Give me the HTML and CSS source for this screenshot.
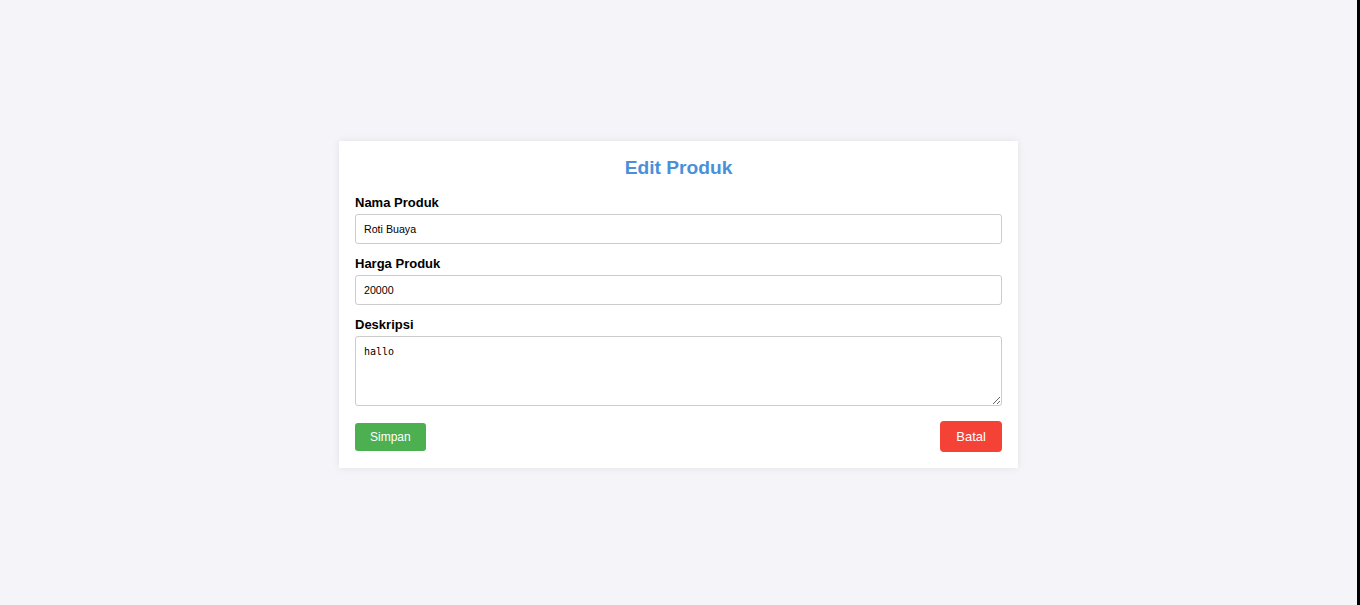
FILE: index.html
```html
<!DOCTYPE html>
<html lang="id">
<head>
<meta charset="utf-8">
<title>Edit Produk</title>
<link rel="stylesheet" href="styles.css">
</head>
<body>
  <div class="card">
    <h2 class="title">Edit Produk</h2>
    <form class="form">
      <label class="label" for="nama">Nama Produk</label>
      <input class="field" id="nama" type="text" value="Roti Buaya">
      <label class="label" for="harga">Harga Produk</label>
      <input class="field" id="harga" type="text" value="20000">
      <label class="label" for="desk">Deskripsi</label>
      <textarea class="area" id="desk">hallo</textarea>
      <div class="actions">
        <button class="btn btn-save" type="button">Simpan</button>
        <button class="btn btn-cancel" type="button">Batal</button>
      </div>
    </form>
  </div>
</body>
</html>
```
FILE: styles.css
```css
html {
  background: #000;
}
body {
  margin: 0 3px 0 0;
  padding-top: 4px;
  box-sizing: border-box;
  min-height: 100vh;
  background: #f4f4f9;
  display: flex;
  align-items: center;
  justify-content: center;
  font-family: "Liberation Sans", Arial, sans-serif;
}
.card {
  width: 679px;
  box-sizing: border-box;
  background: #fff;
  padding: 16px;
  box-shadow: 0 0 8px rgba(0, 0, 0, 0.08);
}
.title {
  margin: 0 0 15px;
  text-align: center;
  color: #4a90d9;
  font-size: 19.2px;
  line-height: 22px;
  font-weight: bold;
}
.form {
  display: flex;
  flex-direction: column;
}
.label {
  font-size: 13px;
  line-height: 16px;
  font-weight: bold;
  color: #000;
  margin: 1px 0 3px;
}
.field {
  height: 30px;
  box-sizing: border-box;
  border: 1px solid #ccc;
  border-radius: 3px;
  padding: 0 8px;
  margin: 0 0 11px;
  font-family: "Liberation Sans", Arial, sans-serif;
  font-size: 10.67px;
  color: #000;
  background: #fff;
}
.area {
  height: 70px;
  box-sizing: border-box;
  border: 1px solid #ccc;
  border-radius: 3px;
  padding: 9px 8px 8px;
  margin: 0 0 15px;
  font-family: "DejaVu Sans Mono", "Liberation Mono", monospace;
  font-size: 10px;
  color: #000;
  background: #fff;
}
.actions {
  display: flex;
  justify-content: space-between;
  align-items: center;
  height: 31px;
}
.btn {
  border: none;
  color: #fff;
  font-family: "Liberation Sans", Arial, sans-serif;
  cursor: pointer;
}
.btn-save {
  background: #4caf50;
  font-size: 12px;
  line-height: 14px;
  padding: 7px 15px;
  border-radius: 3px;
}
.btn-cancel {
  background: #f44336;
  font-size: 13px;
  line-height: 15px;
  padding: 8px 16px;
  border-radius: 4px;
}
```
